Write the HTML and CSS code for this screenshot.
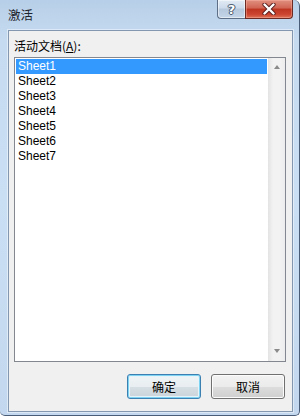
FILE: index.html
```html
<!DOCTYPE html>
<html>
<head>
<meta charset="utf-8">
<link rel="stylesheet" href="styles.css">
</head>
<body>
<div class="window">
  <div class="titlebar">
    <span class="title">激活</span>
    <div class="caption">
      <div class="cbtn help"><span class="q">?</span></div>
      <div class="cbtn close">
        <svg width="14" height="12" viewBox="0 0 14 12">
          <path d="M2.5 1.5 L11.5 10.5 M11.5 1.5 L2.5 10.5" stroke="#5a1e1e" stroke-width="4.2" stroke-linecap="round" fill="none"/>
          <path d="M2.5 1.5 L11.5 10.5 M11.5 1.5 L2.5 10.5" stroke="#ffffff" stroke-width="2.4" stroke-linecap="round" fill="none"/>
        </svg>
      </div>
    </div>
  </div>
  <div class="client">
    <div class="label">活动文档(<u>A</u>):</div>
    <div class="listbox">
      <div class="items">
        <div class="item sel">Sheet1</div>
        <div class="item">Sheet2</div>
        <div class="item">Sheet3</div>
        <div class="item">Sheet4</div>
        <div class="item">Sheet5</div>
        <div class="item">Sheet6</div>
        <div class="item">Sheet7</div>
      </div>
      <div class="scrollbar">
        <span class="arrow up"></span>
        <span class="arrow down"></span>
      </div>
    </div>
    <div class="buttons">
      <button class="btn default">确定</button>
      <button class="btn">取消</button>
    </div>
  </div>
</div>
</body>
</html>
```

FILE: styles.css
```css
html, body {
  margin: 0;
  padding: 0;
  background: #ffffff;
}

.window {
  box-sizing: border-box;
  width: 300px;
  height: 416px;
  display: flex;
  flex-direction: column;
  background: linear-gradient(to bottom, #b7cfe8 0px, #c6dbf0 40px, #cadff3 200px, #c3d8ee 416px);
  border-right: 1px solid #4a5d78;
  border-bottom: 1px solid #4a5d78;
  border-bottom-left-radius: 5px;
  border-bottom-right-radius: 5px;
  border-top-right-radius: 6px;
  font-family: "Noto Sans CJK SC", "Liberation Sans", sans-serif;
}

.titlebar {
  height: 30px;
  display: flex;
  justify-content: space-between;
  align-items: flex-start;
  flex: none;
}

.title {
  margin-left: 8px;
  margin-top: 6px;
  font-size: 12.5px;
  line-height: 18px;
  color: #1e2530;
}

.caption {
  display: flex;
  margin-right: 6px;
}

.cbtn {
  box-sizing: border-box;
  height: 19px;
  display: flex;
  align-items: center;
  justify-content: center;
  border: 1px solid #5d6f86;
  border-top: none;
}

.help {
  width: 28px;
  border-right: none;
  border-bottom-left-radius: 4px;
  background: linear-gradient(to bottom, #e2ebf5 0%, #ccdaea 45%, #b6c8dc 50%, #c4d5e8 100%);
  box-shadow: inset 0 0 0 1px rgba(255,255,255,0.5);
}

.q {
  font-family: "DejaVu Sans", sans-serif;
  font-weight: bold;
  font-size: 13px;
  line-height: 13px;
  color: #ffffff;
  text-shadow: 0 0 1px #3b4a5e, 0 0 1px #3b4a5e, 1px 0 0 #55657a, -1px 0 0 #55657a, 0 1px 0 #55657a, 0 -1px 0 #55657a;
}

.close {
  width: 48px;
  border-bottom-right-radius: 4px;
  border-color: #6b2a24;
  background: linear-gradient(to bottom, #e09080 0%, #d06452 45%, #bd3520 50%, #cc4530 80%, #dd7258 100%);
  box-shadow: inset 0 0 0 1px rgba(255,190,175,0.4);
}

.client {
  box-sizing: border-box;
  width: 285px;
  height: 382px;
  margin-left: 8px;
  border: 1px solid #8397b0;
  background: #f0f0f0;
  box-shadow: 0 0 0 1px rgba(255,255,255,0.45);
  display: flex;
  flex-direction: column;
  padding: 7px 6px 0 5px;
}

.label {
  font-size: 12px;
  line-height: 15px;
  height: 15px;
  color: #000;
}

.label u {
  text-decoration: underline;
  text-underline-offset: 1px;
}

.listbox {
  box-sizing: border-box;
  margin-top: 4px;
  height: 305px;
  width: 272px;
  border: 1px solid #828790;
  background: #ffffff;
  display: flex;
}

.items {
  flex: 1;
  padding: 1px;
}

.item {
  height: 15px;
  line-height: 15px;
  padding-left: 2px;
  font-family: "Liberation Sans", sans-serif;
  font-size: 12px;
  color: #000;
}

.item.sel {
  background: #3399ff;
  color: #ffffff;
}

.scrollbar {
  width: 17px;
  flex: none;
  background: linear-gradient(to right, #e3e3e3, #f2f2f2 30%, #f2f2f2 70%, #ececec);
  display: flex;
  flex-direction: column;
  justify-content: space-between;
  align-items: center;
  padding: 7px 0 8px;
  box-sizing: border-box;
}

.arrow {
  width: 0;
  height: 0;
  border-left: 3.5px solid transparent;
  border-right: 3.5px solid transparent;
}

.arrow.up {
  border-bottom: 4px solid #8a8a8a;
}

.arrow.down {
  border-top: 4px solid #8a8a8a;
}

.buttons {
  display: flex;
  justify-content: flex-end;
  gap: 10px;
  margin-top: 12px;
  padding-right: 1px;
}

.btn {
  box-sizing: border-box;
  width: 74px;
  height: 25px;
  margin: 0;
  padding: 0;
  font-family: "Noto Sans CJK SC", sans-serif;
  font-size: 12px;
  color: #000;
  border: 1px solid #707070;
  border-radius: 3px;
  background: linear-gradient(to bottom, #f2f2f2 0%, #ebebeb 50%, #dddddd 51%, #cfcfcf 100%);
  box-shadow: inset 0 0 0 1px #fcfcfc;
}

.btn.default {
  border-color: #3c7fb1;
  box-shadow: inset 0 0 0 1px #7fd3f2, inset 0 0 0 2px #e6f4fa;
  background: linear-gradient(to bottom, #f0f4f6 0%, #e8eef1 50%, #d6dfe4 51%, #c9d3d9 100%);
}
```
